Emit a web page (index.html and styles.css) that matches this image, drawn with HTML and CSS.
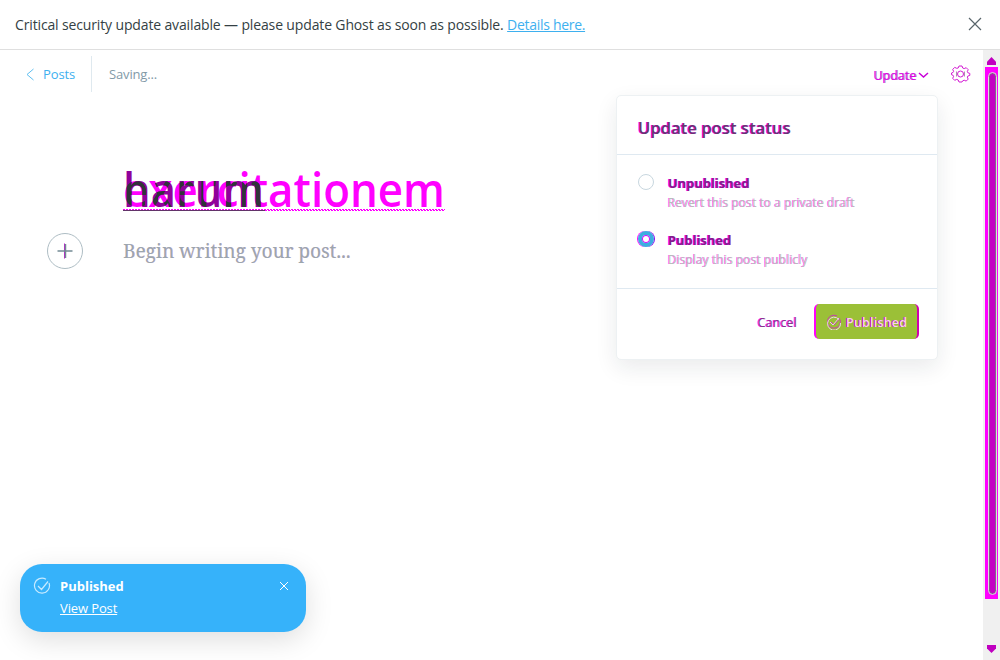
FILE: index.html
```html
<!DOCTYPE html>
<html lang="en">
<head>
<meta charset="utf-8">
<title>Editor</title>
<link rel="stylesheet" href="styles.css">
</head>
<body>
<div class="app">
  <header class="alert">
    <p class="alert-text">Critical security update available — please update Ghost as soon as possible. <a>Details here.</a></p>
    <svg class="alert-close" width="14" height="14" viewBox="0 0 14 14"><path d="M1 1l12 12M13 1L1 13"/></svg>
  </header>
  <div class="workspace">
    <main class="editor">
      <nav class="toolbar">
        <a class="back"><svg width="9" height="13" viewBox="0 0 9 13"><path d="M7.500 1L1 6.500l6.500 5.500"/></svg><span class="posts">Posts</span></a>
        <span class="saving">Saving...</span>
        <span class="update"><span>Update</span><svg width="11" height="7" viewBox="0 0 11 7"><path d="M1 1l4.500 4 4.500-4"/></svg></span>
        <svg class="gear" width="20" height="18" viewBox="0 0 20 18">
          <path d="M8 1h3l.7 2 1.500.6 2-.9 2 2-.9 2 .5 1 2 .7v2l-2 .7-.5 1 .9 2-2 2-2-.9-1.500.6L11 17H8l-.8-2-1.500-.6-2 .9-2-2 .9-2-.5-1-1.600-.6V8l1.600-.6.5-1-.9-2 2-2 2 .9L7.200 3z"/><circle cx="9.500" cy="9" r="3"/>
          <path class="gear-mid" d="M5.500 6.500v5M13.500 6.500v5"/>
        </svg>
      </nav>
      <section class="document">
        <svg class="title" width="340" height="64" viewBox="0 0 340 64">
          <clipPath id="overlap"><text x="0" y="45" textLength="141" lengthAdjust="spacingAndGlyphs">harum</text></clipPath>
          <text class="title-new" x="0" y="45" textLength="322" lengthAdjust="spacingAndGlyphs">exercitationem</text>
          <text class="title-old" x="0" y="45" textLength="141" lengthAdjust="spacingAndGlyphs">harum</text>
          <g clip-path="url(#overlap)"><text class="title-both" x="0" y="45" textLength="322" lengthAdjust="spacingAndGlyphs">exercitationem</text></g>
          <path class="wave" d="M0 47.500H322M1 48.500H322"/>
          <path class="wave-old" d="M0 48.500H142"/>
        </svg>
        <div class="body-row">
          <svg class="plus" width="38" height="38" viewBox="0 0 38 38"><circle cx="19" cy="19" r="17.500"/><path class="plus-v" d="M18.500 11.500v15"/><path class="plus-h" d="M11.500 19h15M19.500 12v14"/></svg>
          <p class="placeholder">Begin writing your post...</p>
        </div>
      </section>
    </main>
    <aside class="scrollbar">
      <i class="arrow up"></i>
      <div class="rail"><div class="thumb"></div></div>
      <i class="arrow down"></i>
    </aside>
  </div>
  <section class="popover">
    <h2><span class="heading">Update post status</span></h2>
    <div class="options">
      <div class="option"><i class="radio"></i><div><b class="unpub">Unpublished</b><p class="revert">Revert this post to a private draft</p></div></div>
      <div class="option"><i class="radio checked"></i><div><b class="pub">Published</b><p class="display">Display this post publicly</p></div></div>
    </div>
    <footer>
      <span class="cancel">Cancel</span>
      <button class="publish"><svg width="16" height="16" viewBox="0 0 16 16"><path class="pink" d="M14 5.500A6.500 6.500 0 1 1 11 2M5 8l3 3 6-7"/><path d="M13 5.500A6.500 6.500 0 1 0 14.500 9M4 8l3 3 6-7"/></svg><span>Published</span></button>
    </footer>
  </section>
  <section class="toast">
    <svg class="toast-check" width="18" height="18" viewBox="0 0 18 18"><path d="M16 6A7.500 7.500 0 1 1 13 2.300M5 9l3.500 3.500L15 4.500"/></svg>
    <div class="toast-copy"><b>Published</b><a>View Post</a></div>
    <svg class="toast-close" width="10" height="10" viewBox="0 0 10 10"><path d="M1 1l8 8M9 1L1 9"/></svg>
  </section>
</div>
</body>
</html>
```
FILE: styles.css
```css
* { box-sizing: border-box; }
body { margin: 0; font-family: "Open Sans", "Noto Sans", sans-serif; background: #fff; color: #343f44; }
p, h2 { margin: 0; }
svg { fill: none; flex: none; display: block; }
.app { position: relative; width: 1000px; height: 660px; overflow: hidden; display: flex; flex-direction: column; }
.alert { height: 50px; border-bottom: 1px solid #dfdfdf; display: flex; align-items: center; justify-content: space-between; padding: 0 18px 1px 15px; }
.alert-text { font-size: 14px; letter-spacing: -.14px; white-space: nowrap; }
.alert a { color: #3eb0ef; text-decoration: underline; letter-spacing: -.3px; }
.alert-close { stroke: #59656b; stroke-width: 1.200; }
.workspace { flex: 1; display: flex; min-height: 0; }
.editor { flex: 1; }
.toolbar { height: 46px; display: flex; align-items: center; padding: 2px 12px 0 26px; font-size: 13px; }
.back { display: flex; align-items: center; gap: 8px; height: 36px; width: 66px; border-right: 1px solid #dfe9ef; color: #3eb0ef; letter-spacing: -.1px; }
.back svg { stroke: #5fbff1; }
.saving { margin-left: 17px; color: #829aa8; letter-spacing: -.15px; }
.update { margin-left: auto; display: flex; align-items: center; gap: 2px; font-size: 12.500px; color: #e000e8; text-shadow: 1px 0 #a466c4; margin-right: 22px; padding-top: 2px; }
.update svg { stroke: #c800d8; stroke-width: 1.500; }
.gear { stroke: #d31cd3; }
.gear-mid { stroke: #b090b0; }
.document { padding: 66px 0 0 46px; }
.title { margin-left: 77px; font-family: "Open Sans", sans-serif; font-size: 47px; font-weight: 600; overflow: visible; }
.title-new { fill: #f0f; }
.title-old { fill: #90009b; }
.title-both { fill: #303539; }
.wave { stroke: #f0f; stroke-dasharray: 2 1; }
.wave-old { stroke: #63336a; }
.body-row { display: flex; align-items: center; gap: 39px; margin-top: 6px; }
.plus circle { stroke: #aebdc4; }
.plus-h { stroke: #738a94; stroke-width: 1.500; }
.plus-v { stroke: #c01bd0; }
.placeholder { font-family: "Noto Serif", "DejaVu Serif", "Liberation Serif", serif; font-size: 19px; color: #9ba6ad; text-shadow: .5px 0 rgba(190,60,210,.3); white-space: nowrap; }
.scrollbar { width: 17px; background: #f0f0f0; display: flex; flex-direction: column; align-items: center; padding: 7px 0; }
.arrow { width: 9px; height: 8px; background: #c000c0; }
.up { clip-path: polygon(50% 0, 100% 60%, 100% 100%, 0 100%, 0 60%); }
.down { clip-path: polygon(0 0, 100% 0, 100% 45%, 50% 100%, 0 45%); margin-top: auto; }
.rail { width: 13px; height: 532px; background: #f0f; margin-top: 2px; padding: 5px 1px 4px 3px; }
.thumb { height: 523px; border: 1px solid #ddd; border-radius: 5px; background: #c400c4; box-shadow: inset 0 0 0 1px #83638a; }
.popover { position: absolute; left: 616px; top: 95px; width: 322px; height: 265px; background: #fff; border: 1px solid #edf1f3; border-radius: 5px; box-shadow: 0 8px 22px rgba(20,35,45,.09); display: flex; flex-direction: column; }
h2 { height: 59px; border-bottom: 1px solid #dfe9f1; padding: 5px 21px 0; display: flex; align-items: center; }
.heading { font-size: 16.700px; font-weight: 600; color: #633870; text-shadow: -1px 0 #f0f; }
.options { height: 134px; border-bottom: 1px solid #dfe9f1; padding: 19px 21px 0; display: flex; flex-direction: column; gap: 18px; }
.option { display: flex; gap: 14px; height: 39px; }
.radio { width: 16px; height: 16px; border: 1px solid #c8d7df; border-radius: 50%; flex: none; }
.checked { border: 4px solid #3eade0; box-shadow: -1px 0 #f0f, 1px 0 #8a00f0, inset 0 0 0 1px #e000ff; }
.option b { display: block; font-size: 13px; letter-spacing: -.05px; line-height: 18px; color: #80208c; text-shadow: -1px 0 #f0f; white-space: nowrap; }
.option p { font-size: 12px; letter-spacing: .08px; line-height: 21px; color: #b9bcbc; text-shadow: -1px 0 rgba(255,0,255,.65); white-space: nowrap; }
footer { display: flex; align-items: center; justify-content: flex-end; padding: 15px 18px 0 0; gap: 17px; }
.cancel { font-size: 12.500px; letter-spacing: .1px; padding-top: 2px; color: #803b8d; text-shadow: -1px 0 #f0f; }
.publish { width: 105px; height: 35px; border: 0 solid #d000b0; border-width: 0 2px; border-left-color: #f0f; border-radius: 5px; background: #9bc037; display: flex; align-items: center; gap: 4px; padding: 1px 0 0 10px; font: 600 12.500px "Open Sans", sans-serif; letter-spacing: .2px; color: #f2d7ed; text-shadow: -1px 0 #d400aa; }
.publish svg { stroke: #ead6e4; }
.publish .pink { stroke: #c63bb0; }
.toast { position: absolute; left: 20px; top: 564px; width: 286px; height: 68px; border-radius: 22px; background: #36b2fa; color: #fff; box-shadow: 0 8px 28px rgba(0,0,0,.13); display: flex; padding: 11px 17px 0 13px; align-items: flex-start; font-size: 13px; }
.toast-check { stroke: #c7eaff; stroke-width: 1.200; margin: 2px 9px 0 0; }
.toast-copy { display: flex; flex-direction: column; line-height: 22px; align-items: flex-start; }
.toast-copy b { font-weight: 700; }
.toast-copy a { text-decoration: underline; letter-spacing: -.12px; }
.toast-close { stroke: #fff; margin: 6px 0 0 auto; }
```
